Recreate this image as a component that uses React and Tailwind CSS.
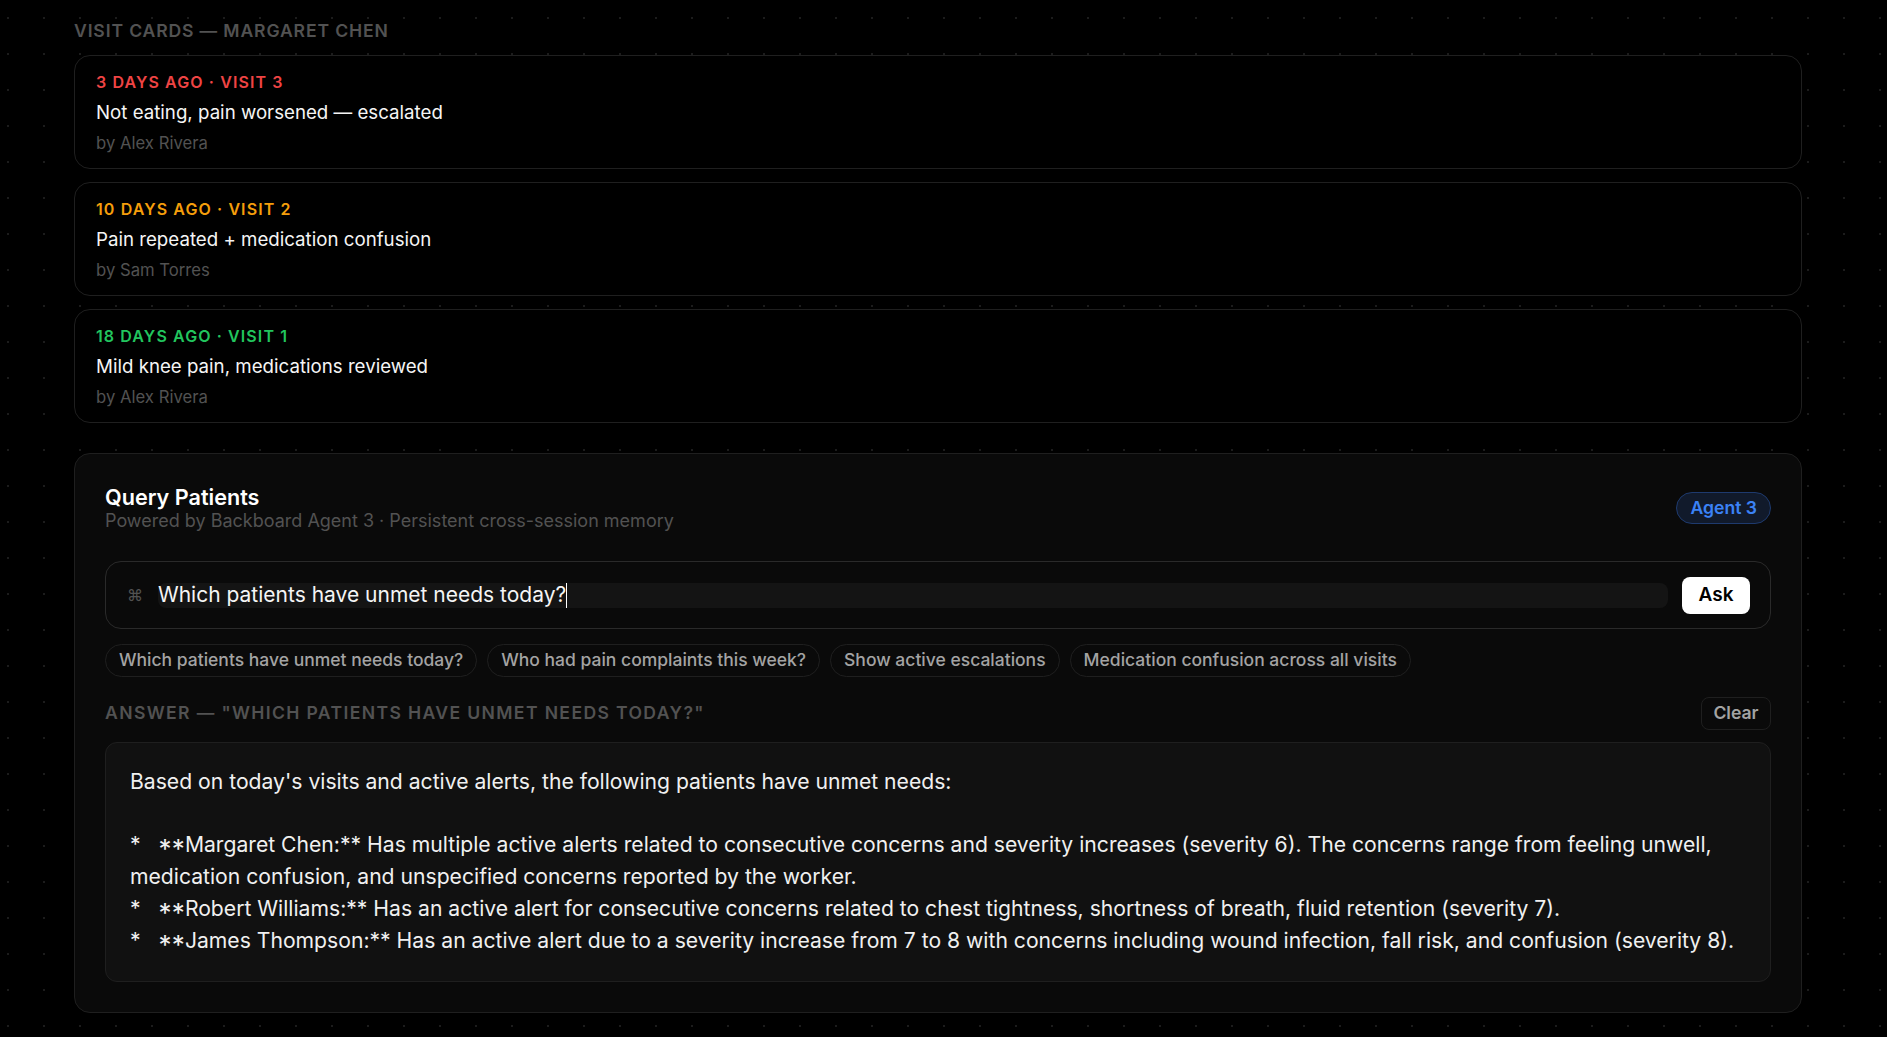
const visits = [
  { when: '3 DAYS AGO · VISIT 3', color: 'text-[#ef4444]', text: 'Not eating, pain worsened — escalated', by: 'by Alex Rivera' },
  { when: '10 DAYS AGO · VISIT 2', color: 'text-[#f59e0b]', text: 'Pain repeated + medication confusion', by: 'by Sam Torres' },
  { when: '18 DAYS AGO · VISIT 1', color: 'text-[#22c55e]', text: 'Mild knee pain, medications reviewed', by: 'by Alex Rivera' },
];

const chips = [
  'Which patients have unmet needs today?',
  'Who had pain complaints this week?',
  'Show active escalations',
  'Medication confusion across all visits',
];

const Stars = () => <span className="inline-block translate-y-[6px] text-[26px] leading-none tracking-[0.2px]">**</span>;

export default function App() {
  return (
    <div className="h-[1037px] overflow-hidden bg-black bg-[radial-gradient(#1c1c1c_1px,transparent_1px)] bg-[size:36px_36px] bg-[position:-10px_0px] pl-[74px] pt-[21px] font-['Inter',sans-serif]">
      <div className="w-[1728px]">
        <h2 className="text-[17.6px] leading-[20px] font-semibold tracking-[0.85px] text-[#525252]">VISIT CARDS — MARGARET CHEN</h2>

        <div className="mt-[14px] flex flex-col gap-[13px]">
          {visits.map((v) => (
            <div key={v.when} className="h-[114px] rounded-[16px] border border-[#1f1f1f] bg-black px-[21px] pt-[16px]">
              <div className={`text-[16px] leading-[20px] font-semibold tracking-[1.1px] ${v.color}`}>{v.when}</div>
              <div className="mt-[9px] text-[18.7px] leading-[23px] text-[#f5f5f5]">{v.text}</div>
              <div className="mt-[9px] text-[16.7px] leading-[20px] text-[#525252]">{v.by}</div>
            </div>
          ))}
        </div>

        <div className="mt-[30px] h-[560px] rounded-[16px] border border-[#1f1f1f] bg-[#0a0a0a] px-[30px] pt-[31px]">
          <div className="flex items-center justify-between">
            <div>
              <div className="text-[21.6px] leading-[25px] font-semibold text-white">Query Patients</div>
              <div className="text-[18px] leading-[21px] text-[#525252]">Powered by Backboard Agent 3 · Persistent cross-session memory</div>
            </div>
            <span className="flex h-[32px] items-center rounded-full border border-[#1e3a6e] bg-[#111a2b] px-[13px] text-[17.6px] font-semibold text-[#3b82f6]">Agent 3</span>
          </div>

          <div className="mt-[30px] flex h-[68px] items-center rounded-[16px] border border-[#2a2a2a] pl-[21px] pr-[20px]">
            <span className="w-[15px] text-[16px] text-[#525252]">⌘</span>
            <div className="ml-[16px] flex h-[25px] flex-1 items-center rounded-[8px] bg-[#141414] text-[21px] text-[#f5f5f5]">
              <span>Which patients have unmet needs today?</span>
              <span className="h-[25px] w-px bg-white" />
            </div>
            <button className="ml-[14px] h-[37px] w-[68px] rounded-[8px] bg-white text-[19px] font-semibold text-black">Ask</button>
          </div>

          <div className="mt-[15px] flex gap-[10px]">
            {chips.map((c) => (
              <span key={c} className="flex h-[33px] items-center rounded-full border border-[#1f1f1f] px-[13px] text-[17.5px] font-medium text-[#a3a3a3]">{c}</span>
            ))}
          </div>

          <div className="mt-[20px] flex h-[33px] items-center justify-between">
            <span className="text-[17.6px] font-semibold tracking-[1.36px] text-[#525252]">ANSWER — "WHICH PATIENTS HAVE UNMET NEEDS TODAY?"</span>
            <button className="h-[33px] w-[70px] rounded-[8px] border border-[#1f1f1f] text-[17.6px] font-semibold text-[#a3a3a3]">Clear</button>
          </div>

          <div className="mt-[12px] h-[240px] rounded-[12px] border border-[#1f1f1f] bg-[#111111] px-[24px] pt-[23px] text-[21.15px] leading-[31.7px] whitespace-pre-wrap text-[#f0f0f0]">
            <div className="mb-[31.7px]">Based on today's visits and active alerts, the following patients have unmet needs:</div>
            <div>{"*   "}<Stars />Margaret Chen:** Has multiple active alerts related to consecutive concerns and severity increases (severity 6). The concerns range from feeling unwell, medication confusion, and unspecified concerns reported by the worker.</div>
            <div>{"*   "}<Stars />Robert Williams:** Has an active alert for consecutive concerns related to chest tightness, shortness of breath, fluid retention (severity 7).</div>
            <div>{"*   "}<Stars />James Thompson:** Has an active alert due to a severity increase from 7 to 8 with concerns including wound infection, fall risk, and confusion (severity 8).</div>
          </div>
        </div>
      </div>
    </div>
  );
}
